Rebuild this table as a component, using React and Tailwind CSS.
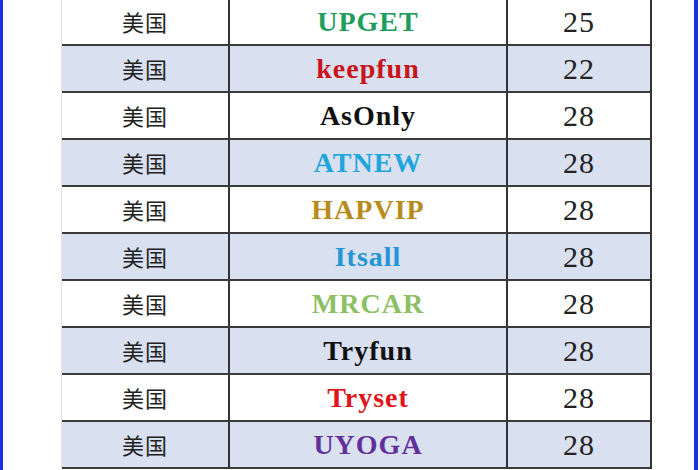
const rows = [
  { name: "UPGET", color: "text-[#1e9e5e]", age: "25" },
  { name: "keepfun", color: "text-[#c8141a]", age: "22" },
  { name: "AsOnly", color: "text-[#111111]", age: "28" },
  { name: "ATNEW", color: "text-[#1fa6dc]", age: "28" },
  { name: "HAPVIP", color: "text-[#b68d1c]", age: "28" },
  { name: "Itsall", color: "text-[#2496d6]", age: "28" },
  { name: "MRCAR", color: "text-[#8cc063]", age: "28" },
  { name: "Tryfun", color: "text-[#111111]", age: "28" },
  { name: "Tryset", color: "text-[#e0141a]", age: "28" },
  { name: "UYOGA", color: "text-[#62309a]", age: "28" },
];

export default function App() {
  return (
    <div className="w-[700px] h-[470px] overflow-hidden bg-white flex">
      <div className="w-[3px] shrink-0 bg-[#1a30e0]" />
      <div className="flex-1 pl-[58px] pr-[42px] -mt-[1px]">
        <div className="border-r-2 border-l border-l-[#e4e4e4] border-r-[#333]">
          {rows.map((r, i) => (
            <div
              key={r.name}
              className={`flex h-[47px] border-b-2 border-[#3a3a3a] ${
                i % 2 === 1 ? "bg-[#d9e0f0]" : "bg-white"
              }`}
            >
              <div className="w-[168px] flex items-center justify-center border-r-2 border-[#333] text-[22px] tracking-[1px] text-[#222] font-['Noto_Sans_CJK_SC',sans-serif]">
                美国
              </div>
              <div
                className={`w-[278px] flex items-center justify-center border-r-2 border-[#333] text-[28px] font-bold tracking-[1px] font-['Liberation_Serif','Times_New_Roman',serif] ${r.color}`}
              >
                {r.name}
              </div>
              <div className="flex-1 flex items-center justify-center text-[30px] tracking-[1px] text-[#222] font-['Liberation_Serif','Times_New_Roman',serif]">
                {r.age}
              </div>
            </div>
          ))}
        </div>
      </div>
      <div className="w-[4px] shrink-0 bg-[#1a30e0] mr-[2px]" />
    </div>
  );
}
